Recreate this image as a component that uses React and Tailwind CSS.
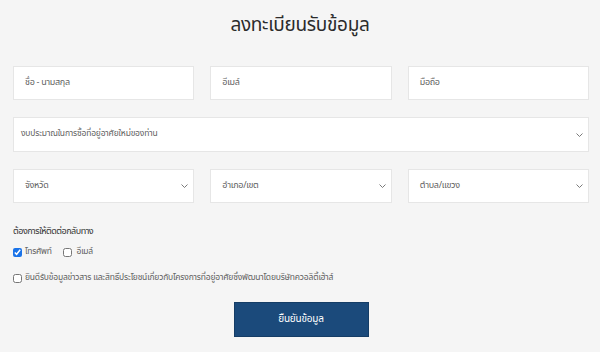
import React from "react";

const font = { fontFamily: '"Noto Sans Thai", "Noto Sans", "Liberation Sans", sans-serif' };

function Chevron() {
  return (
    <svg width="7" height="4" viewBox="0 0 7 4" fill="none" className="shrink-0">
      <path d="M0.5 0.5 L3.5 3.5 L6.5 0.5" stroke="#6b6b6b" strokeWidth="0.9" />
    </svg>
  );
}

function Field({ label, select }) {
  return (
    <div className="flex-1 h-[34px] bg-white border border-[#e6e6e6] flex items-center justify-between pl-[11px] pr-[5px]">
      <span className="text-[9px] tracking-[-0.3px] text-[#5f5f5f]">{label}</span>
      {select && <Chevron />}
    </div>
  );
}

export default function App() {
  return (
    <div className="w-[600px] h-[352px] bg-[#f5f5f5] overflow-hidden" style={font}>
      <div className="pt-[11px] text-center text-[19px] leading-[30px] tracking-[-0.3px] text-[#2b2b2b]">ลงทะเบียนรับข้อมูล</div>
      <div className="pl-[13px] pr-[11px] mt-[25px] flex flex-col">
        <div className="flex gap-[16px]">
          <Field label="ชื่อ - นามสกุล" />
          <Field label="อีเมล์" />
          <Field label="มือถือ" />
        </div>
        <div className="mt-[17px] flex">
          <div className="flex-1 h-[35px] bg-white border border-[#e6e6e6] flex items-center justify-between pl-[7px] pr-[5px]">
            <span className="text-[8.5px] tracking-[-0.2px] text-[#5f5f5f]">งบประมาณในการซื้อที่อยู่อาศัยใหม่ของท่าน</span>
            <Chevron />
          </div>
        </div>
        <div className="mt-[17px] flex gap-[16px]">
          <Field label="จังหวัด" select />
          <Field label="อำเภอ/เขต" select />
          <Field label="ตำบล/แขวง" select />
        </div>
        <div className="mt-[21px] text-[9px] leading-[14px] tracking-[-0.5px] text-[#333]">ต้องการให้ติดต่อกลับทาง</div>
        <div className="mt-[7px] flex items-center text-[8.5px] tracking-[-0.3px] text-[#5f5f5f] leading-[14px]">
          <input type="checkbox" defaultChecked className="w-[9px] h-[9px] m-0 accent-[#1a73e8]" />
          <span className="ml-[3px]">โทรศัพท์</span>
          <input type="checkbox" className="w-[9px] h-[9px] m-0 ml-[11px]" />
          <span className="ml-[5px]">อีเมล์</span>
        </div>
        <div className="mt-[12px] flex items-center text-[8.5px] tracking-[-0.2px] text-[#5f5f5f] leading-[14px]">
          <input type="checkbox" className="w-[9px] h-[9px] m-0" />
          <span className="ml-[3px]">ยินดีรับข้อมูลข่าวสาร และสิทธิ์ประโยชน์เกี่ยวกับโครงการที่อยู่อาศัยซึ่งพัฒนาโดยบริษัทควอลิตี้เฮ้าส์</span>
        </div>
        <div className="mt-[17px] flex justify-center">
          <div className="w-[135px] h-[35px] bg-[#1b4a7b] border border-[#153d66] flex items-center justify-center text-white text-[10px] tracking-[-0.2px]">ยืนยันข้อมูล</div>
        </div>
      </div>
    </div>
  );
}
